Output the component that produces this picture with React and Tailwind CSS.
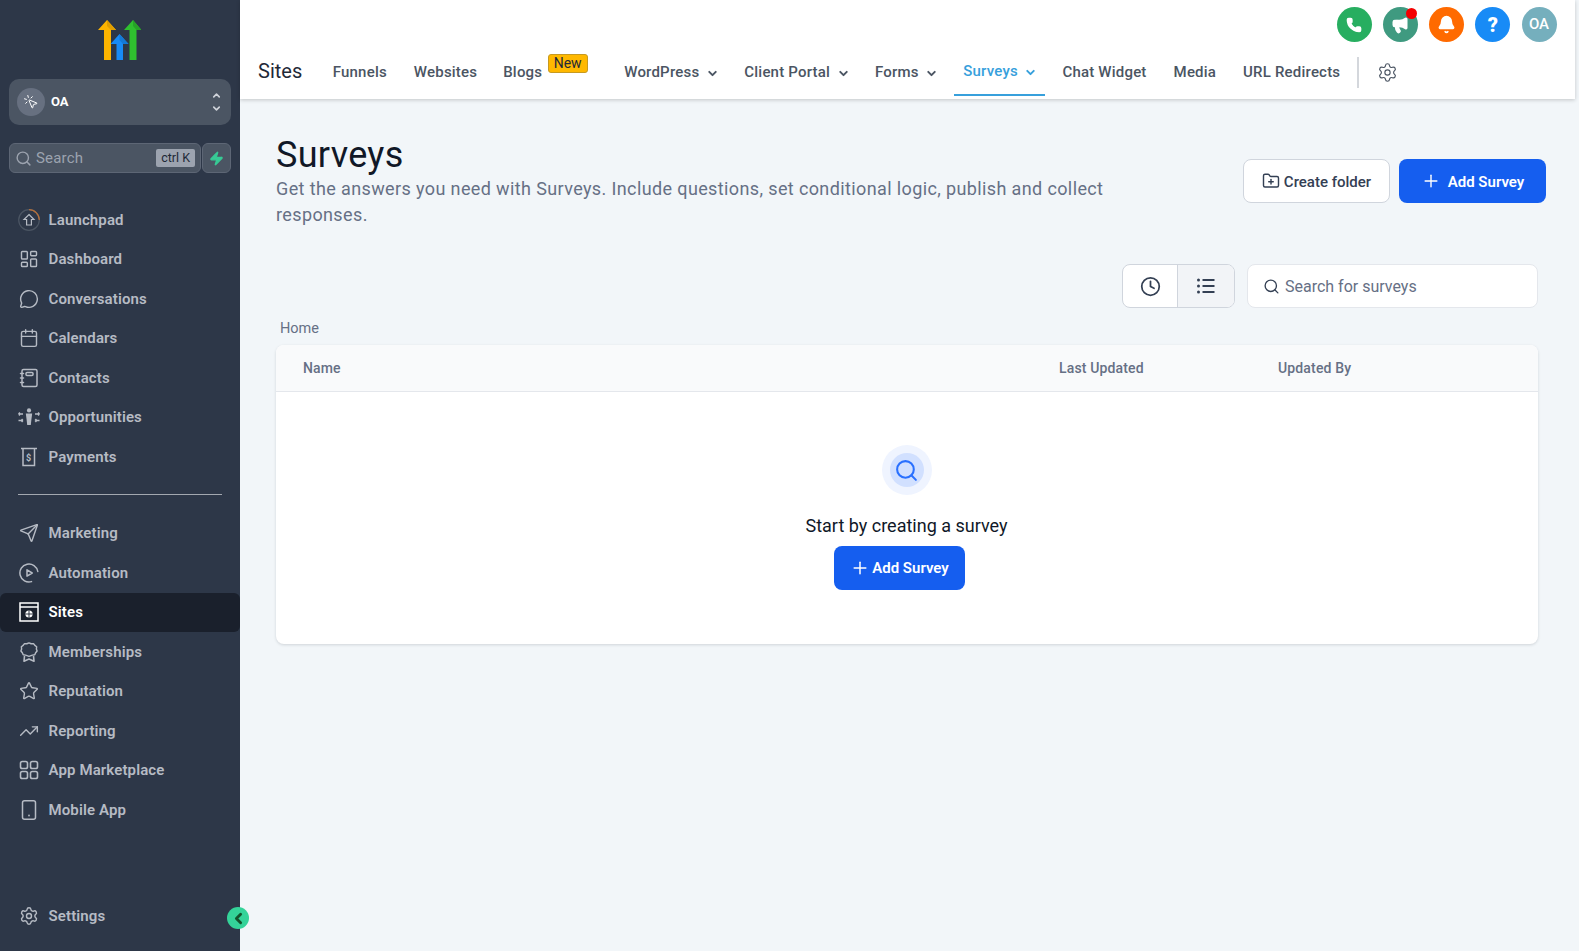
import React from 'react';
import {
  Search, LayoutDashboard, MessageCircle, Calendar, Star, TrendingUp, Send, Settings,
  ChevronDown, ChevronUp, ChevronLeft, Zap, Phone, Megaphone, Bell, Clock, FolderPlus, Plus, MousePointerClick,
} from 'lucide-react';

const icon = 'w-[20px] h-[20px] shrink-0';

// Hand drawn sidebar icons that the icon package has no close match for
const Launchpad = () => (
  <svg viewBox="0 0 24 24" className="w-[24px] h-[24px] shrink-0" fill="none" stroke="currentColor" strokeWidth="1.2">
    <circle cx="12" cy="12" r="10.3" stroke="#4b5563" />
    <path d="M12 1.7a10.3 10.3 0 0 1 10.3 10.3" stroke="#b4703c" />
    <path d="M12 6.5l5 5h-2.6v5.5h-4.8v-5.5H7z" />
  </svg>
);
const Contacts = () => (
  <svg viewBox="0 0 20 20" className={icon} fill="none" stroke="currentColor" strokeWidth="1.5" strokeLinecap="round">
    <rect x="3" y="1.5" width="15" height="17" rx="1.5" />
    <rect x="7" y="4.5" width="7" height="3" rx="1" />
    <path d="M1.5 5.500h3M1.5 10h3M1.5 14.500h3" />
  </svg>
);
const Opportunities = () => (
  <svg viewBox="0 0 22 20" className="w-[22px] h-[20px] shrink-0" fill="currentColor" stroke="none">
    <circle cx="11" cy="3.400" r="2.100" />
    <path d="M7.800 6.500h6.400l-.8 6-.6 5.500h-3.600l-.6-5.500z" />
    <path d="M0.500 7h4.500M0.500 7l1.400-1.500M0.500 7l1.400 1.500M21.500 7h-4.500M21.500 7l-1.400-1.500M21.500 7l-1.400 1.500M0.500 13.500h4.500M5 13.500l-1.400-1.500M5 13.500l-1.400 1.500M21.500 13.500h-4.500M17 13.500l1.400-1.500M17 13.500l1.400 1.500" fill="none" stroke="currentColor" strokeWidth="1.300" />
  </svg>
);
const Payments = () => (
  <svg viewBox="0 0 20 20" className={icon} fill="none" stroke="currentColor" strokeWidth="1.5">
    <path d="M2 1.500h16M4 1.500v17h11.500v-17" />
    <text x="9.700" y="13.600" fontSize="9" fontWeight="700" fill="currentColor" stroke="none" textAnchor="middle" fontFamily="Roboto">$</text>
  </svg>
);
const Automation = () => (
  <svg viewBox="0 0 20 20" className={icon} fill="none" stroke="currentColor" strokeWidth="1.5" strokeLinejoin="round" strokeLinecap="round">
    <path d="M18.800 8.500A9 9 0 1 0 12.500 18.600" />
    <path d="M8 6.800l5.200 3.200L8 13.200z" />
  </svg>
);
const Sites = () => (
  <svg viewBox="0 0 20 20" className={icon} fill="none" stroke="currentColor" strokeWidth="1.500">
    <rect x="1" y="1" width="18" height="18" />
    <path d="M1 5h18" />
    <circle cx="10" cy="12" r="3.600" fill="currentColor" stroke="none" />
    <path d="M6.400 12h7.200M10 8.400v7.200" stroke="#1a202c" strokeWidth="0.900" />
  </svg>
);
const Memberships = () => (
  <svg viewBox="0 0 20 20" className={icon} fill="none" stroke="currentColor" strokeWidth="1.600" strokeLinejoin="round">
    <path d="M10 1l2.400 1 2.600-.2 1.500 2.100 2 1.500-.3 2.600.8 2.200-1.600 2-1 2.300-2.600.4-3.800 1.400-3.800-1.400-2.600-.4-1-2.300-1.600-2 .8-2.200-.3-2.600 2-1.500L5 1.800l2.600.2z" transform="translate(1 0) scale(0.9 0.88)" />
    <path d="M5.500 14l-.5 5.200 5-2.200 5 2.200-.5-5.200" />
  </svg>
);
const Mobile = () => (
  <svg viewBox="0 0 20 20" className={icon} fill="none" stroke="currentColor" strokeWidth="1.500">
    <rect x="3.500" y="0.800" width="13" height="18.400" rx="2" />
    <circle cx="10" cy="15.500" r="0.900" fill="currentColor" stroke="none" />
  </svg>
);
const Grid = () => (
  <svg viewBox="0 0 20 20" className={icon} fill="none" stroke="currentColor" strokeWidth="1.600">
    <rect x="1.500" y="1.500" width="7" height="7" rx="1.800" />
    <rect x="11.500" y="1.500" width="7" height="7" rx="1.800" />
    <rect x="1.500" y="11.500" width="7" height="7" rx="1.800" />
    <rect x="11.500" y="11.500" width="7" height="7" rx="1.800" />
  </svg>
);
const ListDots = () => (
  <svg viewBox="0 0 20 20" className="w-[20px] h-[20px]" fill="none" stroke="currentColor" strokeWidth="2">
    <path d="M6.500 4h12M6.500 10h12M6.500 16h12" />
    <circle cx="2.500" cy="4" r="1.500" fill="currentColor" stroke="none" />
    <circle cx="2.500" cy="10" r="1.500" fill="currentColor" stroke="none" />
    <circle cx="2.500" cy="16" r="1.500" fill="currentColor" stroke="none" />
  </svg>
);

const Logo = () => (
  <svg viewBox="0 0 44 40" className="w-[44px] h-[40px]">
    <path d="M10 0L19 10H14V40H7V10H1z" fill="#fdb400" />
    <path d="M10 0L19 10H14L10 6z" fill="#e09e00" />
    <path d="M36 0L44.500 10H39.500V40H32.500V10H27z" fill="#2fc02f" />
    <path d="M36 0L44.500 10H39.500L36 6z" fill="#27a327" />
    <path d="M22.500 14L31.500 24H26V40H19.500V24H13.500z" fill="#188bf6" />
    <path d="M22.500 14L31.500 24H26L22.500 20z" fill="#1479d6" />
  </svg>
);

const topItems = [
  ['Launchpad', <Launchpad />],
  ['Dashboard', <LayoutDashboard className={icon} strokeWidth={1.7} />],
  ['Conversations', <MessageCircle className={icon} strokeWidth={1.7} />],
  ['Calendars', <Calendar className={icon} strokeWidth={1.7} />],
  ['Contacts', <Contacts />],
  ['Opportunities', <Opportunities />],
  ['Payments', <Payments />],
];
const bottomItems = [
  ['Marketing', <Send className={icon} strokeWidth={1.7} />],
  ['Automation', <Automation />],
  ['Sites', <Sites />, true],
  ['Memberships', <Memberships />],
  ['Reputation', <Star className={icon} strokeWidth={1.7} />],
  ['Reporting', <TrendingUp className={icon} strokeWidth={1.7} />],
  ['App Marketplace', <Grid />],
  ['Mobile App', <Mobile />],
];

function NavRow({ label, children, active }) {
  return (
    <div className={`h-[39.5px] pl-[18px] flex items-center gap-[8.5px] rounded-[6px] text-[15px] font-semibold tracking-[0.12px] ${active ? 'bg-[#1a202c] text-white' : 'text-[#b6bbc4]'}`}>
      <span className="w-[22px] flex justify-center">{children}</span>
      <span>{label}</span>
    </div>
  );
}

function Sidebar() {
  return (
    <aside className="relative w-[240px] shrink-0 h-full bg-[#2d3748] flex flex-col">
      <div className="h-[79px] pt-[20px] pr-[2px] flex justify-center shrink-0"><Logo /></div>

      <div className="mx-[9px] h-[46px] rounded-[10px] bg-[#4b5563] flex items-center pl-[8px] pr-[9px] shrink-0">
        <span className="w-[28px] h-[28px] rounded-full bg-[#677080] flex items-center justify-center text-white">
          <MousePointerClick className="w-[16px] h-[16px]" strokeWidth={1.5} />
        </span>
        <span className="ml-[6px] text-[13px] font-bold text-white">OA</span>
        <span className="ml-auto flex flex-col text-[#cfd3da]">
          <ChevronUp className="w-[11px] h-[11px]" strokeWidth={3.5} />
          <ChevronDown className="w-[11px] h-[11px] mt-[2px]" strokeWidth={3.5} />
        </span>
      </div>

      <div className="mx-[9px] mt-[18px] flex gap-[1px] shrink-0">
        <div className="w-[192px] h-[30px] rounded-[6px] bg-[#4b5563] border border-[#5d6675] flex items-center pl-[5px] pr-[5px]">
          <Search className="w-[17px] h-[17px] text-[#9ca3af]" strokeWidth={2} />
          <span className="ml-[4px] text-[15px] tracking-[0.2px] text-[#9ca3af]">Search</span>
          <span className="ml-auto h-[18px] px-[5px] rounded-[2px] bg-[#9ca3af] text-[#1f2937] text-[12.5px] leading-[18px]">ctrl K</span>
        </div>
        <div className="w-[29px] h-[30px] rounded-[6px] bg-[#4b5563] border border-[#5d6675] flex items-center justify-center">
          <Zap className="w-[15px] h-[15px] text-[#37ca95] fill-[#37ca95]" />
        </div>
      </div>

      <nav className="mt-[27px] shrink-0">
        {topItems.map(([label, ic]) => <NavRow key={label} label={label}>{ic}</NavRow>)}
      </nav>
      <div className="mx-[18px] mt-[17px] mb-[19px] h-px bg-[#a3a8b0] shrink-0" />
      <nav className="shrink-0">
        {bottomItems.map(([label, ic, active]) => <NavRow key={label} label={label} active={active}>{ic}</NavRow>)}
      </nav>

      <div className="mt-auto mb-[15px]">
        <NavRow label="Settings"><Settings className={icon} strokeWidth={1.7} /></NavRow>
      </div>

      <button className="absolute right-[-9px] bottom-[22px] w-[22px] h-[22px] rounded-full bg-[#34d399] flex items-center justify-center text-[#14532d]">
        <ChevronLeft className="w-[17px] h-[17px]" strokeWidth={4} />
      </button>
    </aside>
  );
}

function Circle({ color, children }) {
  return <span className={`relative w-[35px] h-[35px] rounded-full flex items-center justify-center text-white ${color}`}>{children}</span>;
}

function NavLink({ label, caret, active, className = '' }) {
  return (
    <div className={`h-full flex items-center gap-[6.5px] text-[15px] font-medium tracking-[0.2px] ${active ? 'text-[#37a0dc] border-b-2 border-[#37a0dc] pl-[9px] pr-[8px]' : `text-[#4b5563] pl-[13.5px] ${caret ? 'pr-[12px]' : 'pr-[13.5px]'}`} ${className}`}>
      <span>{label}</span>
      {caret && <ChevronDown className="w-[13px] h-[13px] relative top-px" strokeWidth={3.6} />}
    </div>
  );
}

function Header() {
  return (
    <header className="mr-[4px] h-[99px] shrink-0 bg-white shadow-[0_1px_4px_rgba(0,0,0,0.2)] relative z-10 flex flex-col">
      <div className="h-[49px] flex justify-end gap-[11.2px] pt-[7px] pr-[18.5px]">
        <Circle color="bg-[#27ae60]"><Phone className="w-[16px] h-[16px] fill-white" /></Circle>
        <Circle color="bg-[#3f9a80]">
          <Megaphone className="w-[18px] h-[18px] fill-white" />
          <span className="absolute top-[1px] right-[1px] w-[11px] h-[11px] rounded-full bg-[#f40000]" />
        </Circle>
        <Circle color="bg-[#ff6a00]"><Bell className="w-[19px] h-[19px] fill-white" /></Circle>
        <Circle color="bg-[#188bf6]"><span className="text-[20px] font-black">?</span></Circle>
        <Circle color="bg-[#75afbd]"><span className="text-[15px] font-medium">OA</span></Circle>
      </div>
      <div className="h-[47px] flex items-stretch pl-[18px]">
        <span className="self-center -mt-[4px] text-[20px] text-[#1f2937] mr-[17px]">Sites</span>
        <NavLink label="Funnels" />
        <NavLink label="Websites" className="-mr-[1px]" />
        <div className="relative mr-[55px]">
          <NavLink label="Blogs" />
          <span className="absolute left-[58px] top-[5px] h-[19px] px-[5px] rounded-[3px] bg-[#ffb800] border border-[#c79a20] text-[#1f2937] text-[14px] leading-[17px]">New</span>
        </div>
        <NavLink label="WordPress" caret />
        <NavLink label="Client Portal" caret />
        <NavLink label="Forms" caret />
        <NavLink label="Surveys" caret active className="ml-[4px]" />
        <NavLink label="Chat Widget" className="ml-[3.5px]" />
        <NavLink label="Media" />
        <NavLink label="URL Redirects" />
        <div className="self-center w-[2px] h-[31px] bg-[#d4d7dc] ml-[3.5px]" />
        <span className="self-center ml-[18px] text-[#4b5563]"><Settings className="w-[21px] h-[21px]" strokeWidth={1.3} /></span>
      </div>
    </header>
  );
}

function Content() {
  return (
    <main className="flex-1 pl-[36px] pr-[41px] min-h-0">
      <div className="flex justify-between items-start pt-[36px]">
        <div className="w-[880px]">
          <h1 className="text-[36px] leading-[40px] text-[#111827] tracking-[0.3px]">Surveys</h1>
          <p className="mt-[1px] text-[18px] leading-[26px] text-[#667085] tracking-[0.38px]">Get the answers you need with Surveys. Include questions, set conditional logic, publish and collect responses.</p>
        </div>
        <div className="flex gap-[9px] mt-[24px] -mr-[8px]">
          <button className="w-[147px] h-[44px] rounded-[8px] bg-white border border-[#d0d5dd] flex items-center justify-center gap-[4px] text-[15px] font-medium text-[#344054]">
            <FolderPlus className="w-[18px] h-[18px]" strokeWidth={1.9} /><span className="relative top-px">Create folder</span>
          </button>
          <button className="w-[147px] h-[44px] rounded-[8px] bg-[#155eef] flex items-center justify-center gap-[7px] text-[15px] font-semibold text-white">
            <Plus className="w-[20px] h-[20px]" strokeWidth={1.7} /><span className="relative top-px">Add Survey</span>
          </button>
        </div>
      </div>

      <div className="flex justify-end gap-[12px] mt-[36px]">
        <div className="flex h-[44px] rounded-[8px] border border-[#d0d5dd] bg-white overflow-hidden">
          <span className="w-[55px] flex items-center justify-center text-[#344054] border-r border-[#d0d5dd]"><Clock className="w-[21px] h-[21px]" strokeWidth={2} /></span>
          <span className="w-[56px] flex items-center justify-center text-[#344054] bg-[#f2f4f7]"><ListDots /></span>
        </div>
        <div className="w-[291px] h-[44px] rounded-[8px] border border-[#e4e7ec] bg-white flex items-center pl-[15px] gap-[5px] text-[16px] text-[#667085]">
          <Search className="w-[17px] h-[17px] text-[#344054]" strokeWidth={1.9} /><span className="relative top-px">Search for surveys</span>
        </div>
      </div>

      <div className="mt-[10px] ml-[4px] text-[14.5px] leading-[22px] text-[#667085]">Home</div>

      <section className="mt-[5px] h-[299px] rounded-[8px] bg-white shadow-[0_1px_3px_rgba(16,24,40,0.15)] flex flex-col">
        <div className="h-[47px] shrink-0 rounded-t-[8px] bg-[#f9fafb] border-b border-[#e4e7ec] grid grid-cols-[756px_219px_1fr] pl-[27px] items-center text-[14px] font-medium tracking-[0.15px] text-[#667085]">
          <span>Name</span>
          <span>Last Updated</span>
          <span>Updated By</span>
        </div>
        <div className="flex flex-col items-center pt-[53px] pr-[1px]">
          <div className="w-[50px] h-[50px] rounded-full bg-[#eff4ff] flex items-center justify-center">
            <div className="w-[34px] h-[34px] rounded-full bg-[#d1e0ff] flex items-center justify-center">
              <Search className="w-[25px] h-[25px] text-[#2970ff]" strokeWidth={2} />
            </div>
          </div>
          <p className="mt-[18px] text-[18px] leading-[26px] text-[#101828]">Start by creating a survey</p>
          <button className="mt-[7px] -ml-[14px] w-[131px] h-[44px] rounded-[8px] bg-[#155eef] flex items-center justify-center gap-[2px] text-[15px] font-semibold text-white">
            <Plus className="w-[20px] h-[20px]" strokeWidth={1.8} />Add Survey
          </button>
        </div>
      </section>
    </main>
  );
}

export default function App() {
  return (
    <div className="w-full h-screen flex overflow-hidden bg-[#f2f6f9] font-['Roboto',sans-serif]">
      <Sidebar />
      <div className="flex-1 min-w-0 flex flex-col">
        <Header />
        <Content />
      </div>
    </div>
  );
}
